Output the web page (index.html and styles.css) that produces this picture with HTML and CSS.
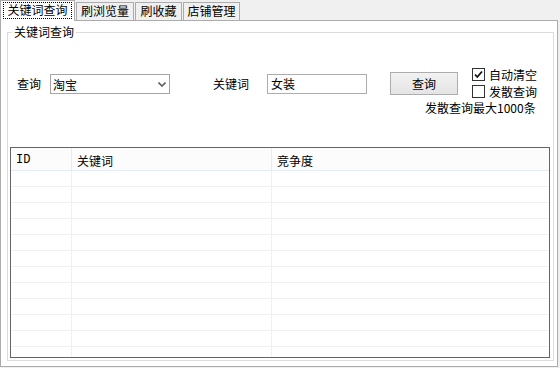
FILE: index.html
```html
<!DOCTYPE html>
<html lang="zh-CN">
<head>
    <meta charset="UTF-8">
    <title>关键词查询</title>
    <link rel="stylesheet" href="styles.css">
</head>
<body>
    <div class="tabs">
        <div class="tab active"><span class="focus">关键词查询</span></div>
        <div class="tab t2">刷浏览量</div>
        <div class="tab t3">刷收藏</div>
        <div class="tab t4">店铺管理</div>
    </div>
    <div class="panel">
        <div class="group">
            <span class="legend">关键词查询</span>
            <div class="form">
                <span class="lbl lbl-query">查询</span>
                <div class="combo">
                    <span>淘宝</span>
                    <svg width="8" height="5" viewBox="0 0 8 5"><path d="M0.5 0.5 L4 4 L7.5 0.5" fill="none" stroke="#5f5f5f" stroke-width="1.6"/></svg>
                </div>
                <span class="lbl lbl-kw">关键词</span>
                <div class="textbox">女装</div>
                <button class="btn">查询</button>
                <div class="checks">
                    <label class="check"><span class="box"><svg width="11" height="11" viewBox="0 0 11 11"><path d="M2 5.5 L4.3 8 L9 2.5" fill="none" stroke="#111" stroke-width="1.8"/></svg></span>自动清空</label>
                    <label class="check"><span class="box"></span>发散查询</label>
                    <div class="note">发散查询最大1000条</div>
                </div>
            </div>
            <div class="grid">
                <div class="row head">
                    <div class="c1 id">ID</div>
                    <div class="c2">关键词</div>
                    <div class="c3">竞争度</div>
                </div>
                <div class="row"><div class="c1"></div><div class="c2"></div><div class="c3"></div></div>
                <div class="row"><div class="c1"></div><div class="c2"></div><div class="c3"></div></div>
                <div class="row"><div class="c1"></div><div class="c2"></div><div class="c3"></div></div>
                <div class="row"><div class="c1"></div><div class="c2"></div><div class="c3"></div></div>
                <div class="row"><div class="c1"></div><div class="c2"></div><div class="c3"></div></div>
                <div class="row"><div class="c1"></div><div class="c2"></div><div class="c3"></div></div>
                <div class="row"><div class="c1"></div><div class="c2"></div><div class="c3"></div></div>
                <div class="row"><div class="c1"></div><div class="c2"></div><div class="c3"></div></div>
                <div class="row"><div class="c1"></div><div class="c2"></div><div class="c3"></div></div>
                <div class="row"><div class="c1"></div><div class="c2"></div><div class="c3"></div></div>
                <div class="row"><div class="c1"></div><div class="c2"></div><div class="c3"></div></div>
                <div class="row"><div class="c1"></div><div class="c2"></div><div class="c3"></div></div>
            </div>
        </div>
    </div>
</body>
</html>
```

FILE: styles.css
```css
body {
    margin: 0;
    background-color: #f0f0f0;
    font-family: "Noto Sans CJK SC", sans-serif;
    font-size: 12px;
    color: #000;
    width: 560px;
    height: 368px;
    overflow: hidden;
}
.tabs {
    display: flex;
    align-items: flex-end;
    height: 20px;
}
.tab {
    box-sizing: border-box;
    height: 18px;
    border: 1px solid #acacac;
    border-bottom: none;
    background-color: #f0f0f0;
    line-height: 16px;
    text-align: center;
    margin-left: 1px;
}
.tab.active {
    width: 75px;
    height: 21px;
    margin: 0 0 -1px 0;
    background-color: #fff;
    position: relative;
    z-index: 1;
    padding: 1px 2px 0 2px;
}
.focus {
    display: block;
    outline: 1px dotted #000;
    outline-offset: -1px;
    height: 17px;
    line-height: 16px;
}
.t2 { width: 58px; }
.t3 { width: 47px; }
.t4 { width: 57px; }
.panel {
    box-sizing: border-box;
    width: 558px;
    height: 347px;
    border: 1px solid #acacac;
    background-color: #fff;
    padding: 11px 3px 5px 6px;
}
.group {
    box-sizing: border-box;
    height: 100%;
    border: 1px solid #dcdcdc;
    position: relative;
    display: flex;
    flex-direction: column;
}
.legend {
    position: absolute;
    top: -8px;
    left: 4px;
    padding: 0 2px;
    background-color: #fff;
    line-height: 14px;
}
.form {
    height: 114px;
    display: flex;
    align-items: flex-start;
    padding-top: 39px;
    box-sizing: border-box;
}
.lbl {
    line-height: 20px;
    margin-top: 2px;
}
.lbl-query { margin-left: 9px; width: 33px; }
.lbl-kw { margin-left: 43px; width: 54px; }
.combo {
    box-sizing: border-box;
    width: 120px;
    height: 20px;
    margin-top: 2px;
    border: 1px solid #a6a6a6;
    display: flex;
    align-items: center;
    justify-content: space-between;
    padding: 0 3px 0 2px;
}
.textbox {
    box-sizing: border-box;
    width: 100px;
    height: 20px;
    margin-top: 2px;
    border: 1px solid #abadb3;
    padding-left: 3px;
    line-height: 18px;
}
.btn {
    box-sizing: border-box;
    width: 68px;
    height: 23px;
    margin-left: 23px;
    border: 1px solid #adadad;
    background: linear-gradient(#f2f2f2, #e4e4e4);
    font-family: inherit;
    font-size: 12px;
    padding: 0;
}
.checks {
    margin-left: 14px;
    margin-top: -6px;
    display: flex;
    flex-direction: column;
}
.check {
    display: flex;
    align-items: center;
    height: 17px;
}
.box {
    box-sizing: border-box;
    width: 13px;
    height: 13px;
    border: 1px solid #333;
    background-color: #fff;
    margin-right: 4px;
    display: flex;
    align-items: center;
    justify-content: center;
}
.note {
    margin-left: -47px;
    margin-top: 0;
    line-height: 16px;
}
.grid {
    flex: 1;
    margin: 0 3px 2px 2px;
    border: 1px solid #646464;
    overflow: hidden;
}
.row {
    display: flex;
    height: 16px;
    box-sizing: border-box;
    border-bottom: 1px solid #f0f0f0;
}
.row.head {
    height: 23px;
    background-color: #fcfcfc;
    border-bottom: 1px solid #e3ecf8;
}
.c1, .c2, .c3 {
    box-sizing: border-box;
    border-right: 1px solid #f0f0f0;
    padding-left: 5px;
}
.head .c1, .head .c2, .head .c3 {
    padding-top: 3px;
    line-height: 19px;
}
.head .c1, .head .c2 {
    border-right-color: #e3ecf8;
}
.c1 { width: 61px; }
.c2 { width: 200px; }
.c3 { flex: 1; border-right: none; }
.id { font-family: "Liberation Mono", monospace; }
```
